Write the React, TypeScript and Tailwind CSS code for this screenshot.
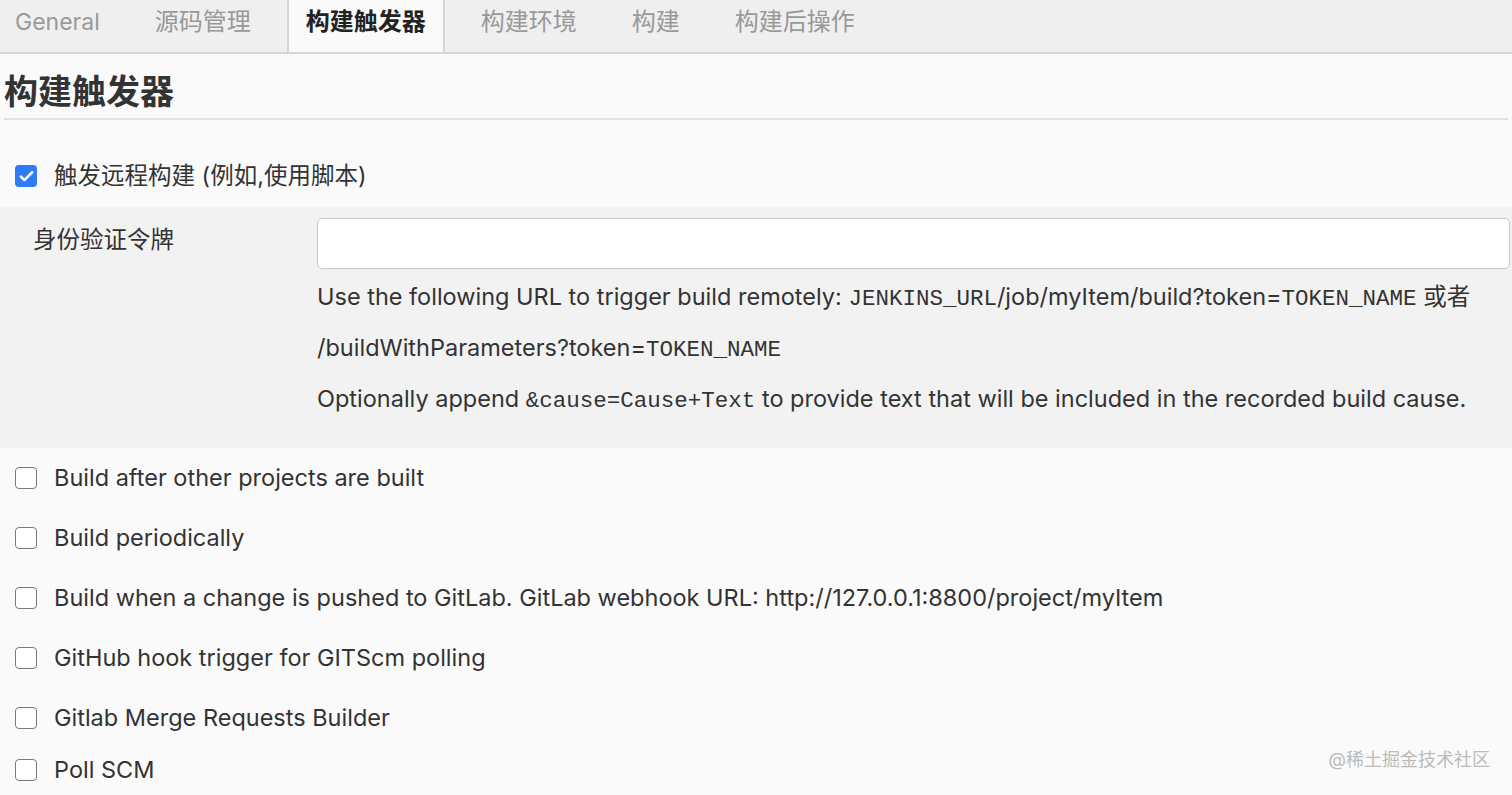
import { Check } from 'lucide-react';

const tabs = ['General', '源码管理', '构建触发器', '构建环境', '构建', '构建后操作'];

const triggers = [
  'Build after other projects are built',
  'Build periodically',
  'Build when a change is pushed to GitLab. GitLab webhook URL: http://127.0.0.1:8800/project/myItem',
  'GitHub hook trigger for GITScm polling',
  'Gitlab Merge Requests Builder',
];

const sans = "font-['Inter','Noto_Sans_CJK_SC',sans-serif]";
const mono = "font-['Liberation_Mono','Noto_Sans_CJK_SC',monospace] text-[22.5px] leading-none";

function Box({ checked }: { checked?: boolean }) {
  if (checked) {
    return (
      <span className="w-[22px] h-[22px] rounded-[4px] bg-[#2d7cf6] flex items-center justify-center flex-shrink-0">
        <Check className="w-[17px] h-[17px] text-white" strokeWidth={3.5} />
      </span>
    );
  }
  return <span className="w-[22px] h-[22px] rounded-[4px] bg-white border-[1.5px] border-[#7a7a7a] flex-shrink-0" />;
}

export default function App() {
  return (
    <div className={`w-[1512px] h-[795px] overflow-hidden bg-[#fafafa] text-[#333] relative ${sans}`}>
      {/* tab strip */}
      <div className="h-[54px] bg-[#efefef] border-b-2 border-[#d6d6d6] flex items-stretch gap-[17px]">
        {tabs.map((t, i) => (
          <div
            key={t}
            className={
              i === 2
                ? 'bg-[#fafafa] border-x-2 border-[#d6d6d6] px-[17px] pb-[8px] flex items-center text-[24px] font-bold text-[#222]'
                : `${i === 0 ? 'pl-[15px] pr-[19px] text-[23px]' : 'px-[19px] text-[24px]'} pb-[8px] flex items-center text-[#999]`
            }
          >
            {t}
          </div>
        ))}
      </div>

      {/* section heading */}
      <div className="mx-[4px] pt-[14px] pb-[2px] border-b-2 border-[#e2e2e2]">
        <h2 className="text-[34px] font-bold text-[#333] leading-[48px]">构建触发器</h2>
      </div>

      {/* remote trigger */}
      <label className="flex items-center gap-[17px] pl-[15px] h-[54px] mt-[29px] text-[23.5px]">
        <Box checked />
        <span>触发远程构建 (例如,使用脚本)</span>
      </label>

      <div className="bg-[#f2f2f2] mt-[4px] pt-[11px] pb-[24px] flex">
        <div className="w-[317px] pl-[33px] pt-[4px] text-[23.5px] leading-[36px]">身份验证令牌</div>
        <div className="flex-1 pr-[2px]">
          <div className="h-[51px] bg-white border-[1.5px] border-[#c8c8c8] rounded-[5px]" />
          <div className="text-[23.5px] leading-[51px] mt-[2px]">
            <div>
              Use the following URL to trigger build remotely: <span className={mono}>JENKINS_URL</span>
              /job/myItem/build?token=<span className={mono}>TOKEN_NAME</span> 或者
              <br />
              /buildWithParameters?token=<span className={mono}>TOKEN_NAME</span>
            </div>
            <div>
              Optionally append <span className={mono}>&amp;cause=Cause+Text</span> to provide text that will be included in the recorded build cause.
            </div>
          </div>
        </div>
      </div>

      {/* other triggers */}
      <div>
        {triggers.map(t => (
          <label key={t} className="flex items-center gap-[17px] pl-[15px] h-[60px] text-[23.5px]">
            <Box />
            <span>{t}</span>
          </label>
        ))}
        <label className="flex items-center gap-[17px] pl-[15px] h-[44px] text-[23.5px]">
          <Box />
          <span>Poll SCM</span>
        </label>
      </div>

      <div className="absolute right-[22px] bottom-[22px] text-[18px] text-[#bbb]">@稀土掘金技术社区</div>
    </div>
  );
}
